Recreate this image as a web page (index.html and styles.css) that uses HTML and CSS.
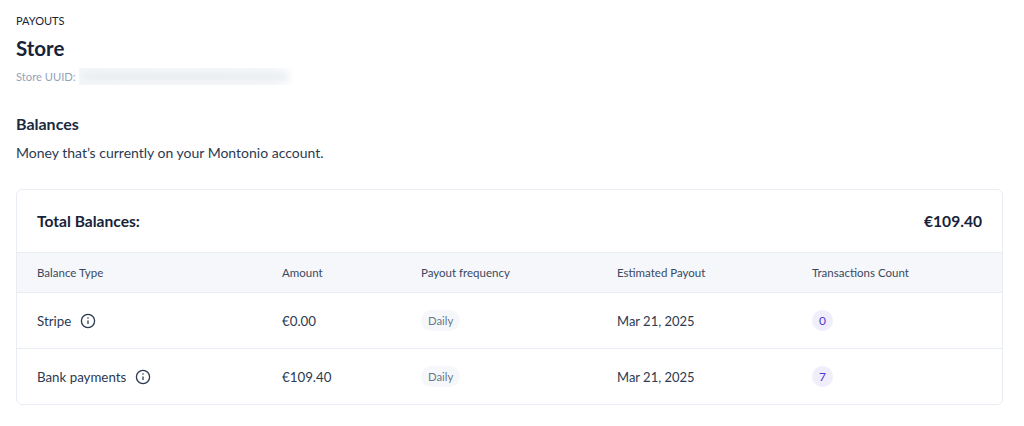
FILE: index.html
```html
<!DOCTYPE html>
<html lang="en">
<head>
<meta charset="utf-8">
<title>Payouts</title>
<link rel="stylesheet" href="styles.css">
</head>
<body>
<main class="page">
  <div class="crumb">PAYOUTS</div>
  <h1 class="title">Store</h1>
  <div class="uuid"><span>Store UUID:</span><span class="uuid-mask"><i class="blob"></i></span></div>
  <h2 class="section">Balances</h2>
  <p class="lead">Money that’s currently on your Montonio account.</p>
  <section class="card">
    <div class="total"><span>Total Balances:</span><span>€109.40</span></div>
    <div class="row head">
      <div>Balance Type</div><div>Amount</div><div>Payout frequency</div><div>Estimated Payout</div><div>Transactions Count</div>
    </div>
    <div class="row body">
      <div class="type">Stripe <svg class="info" viewBox="0 0 16 16"><circle cx="8" cy="8" r="6.6"/><path d="M8 7.4v3.6"/><circle class="dot" cx="8" cy="5" r=".8"/></svg></div>
      <div>€0.00</div>
      <div><span class="pill">Daily</span></div>
      <div class="date">Mar 21, 2025</div>
      <div><span class="count">0</span></div>
    </div>
    <div class="row body">
      <div class="type">Bank payments <svg class="info" viewBox="0 0 16 16"><circle cx="8" cy="8" r="6.6"/><path d="M8 7.4v3.6"/><circle class="dot" cx="8" cy="5" r=".8"/></svg></div>
      <div>€109.40</div>
      <div><span class="pill">Daily</span></div>
      <div class="date">Mar 21, 2025</div>
      <div><span class="count">7</span></div>
    </div>
  </section>
</main>
</body>
</html>
```
FILE: styles.css
```css
* { box-sizing: border-box; }
html, body { margin: 0; background: #fff; }
body { font-family: "Lato", "Inter", sans-serif; color: #1b2a41; overflow: hidden; }
.page { padding: 14px 21px 0 16px; }
.crumb { font-size: 11px; line-height: 14px; color: #1a2436; }
.title { margin: 6px 0 0; font-size: 20.5px; line-height: 28px; font-weight: 700; color: #172338; }
.uuid { display: flex; align-items: center; gap: 3px; height: 18px; margin-top: 5px; font-size: 11.2px; color: #93a3ba; }
.uuid-mask { width: 217px; height: 17px; overflow: hidden; background: linear-gradient(90deg, #f4f6f8 0%, #f5f7f9 88%, #fff 100%); }
.blob { display: block; width: 205px; height: 7px; margin: 5px 0 0 4px; background: #e9ecf0; filter: blur(3px); }
.section { margin: 28px 0 0; font-size: 16px; line-height: 22px; font-weight: 700; color: #1b2a41; }
.lead { margin: 7px 0 0; font-size: 14px; line-height: 22px; color: #2b3a52; }
.card { margin-top: 25px; border: 1px solid #e8ecf3; border-radius: 6px; overflow: hidden; }
.total { display: flex; justify-content: space-between; align-items: center; height: 63px; padding: 0 20px; font-size: 15.6px; font-weight: 700; color: #172338; border-bottom: 1px solid #e8ecf3; }
.row { display: grid; grid-template-columns: 245px 139px 196px 195px 1fr; padding-left: 20px; align-items: center; }
.head { height: 40px; background: #f5f7fb; border-bottom: 1px solid #e8ecf3; font-size: 11.5px; color: #3a4960; }
.body { height: 56px; font-size: 13.3px; color: #2b3a52; border-bottom: 1px solid #e8ecf3; }
.body:last-child { border-bottom: 0; height: 55px; }
.date { font-size: 13px; }
.type { display: flex; align-items: center; gap: 9px; }
.info { width: 16px; height: 16px; fill: none; stroke: #2b3a52; stroke-width: 1.3; }
.info .dot { fill: #2b3a52; stroke: none; }
.pill { display: inline-flex; align-items: center; height: 21px; padding: 0 7px; border-radius: 11px; background: #f5f7fb; font-size: 11.3px; color: #67778f; }
.count { display: inline-flex; align-items: center; justify-content: center; width: 21px; height: 21px; border-radius: 50%; background: #f1eefb; font-size: 12px; color: #5236d6; }
```
